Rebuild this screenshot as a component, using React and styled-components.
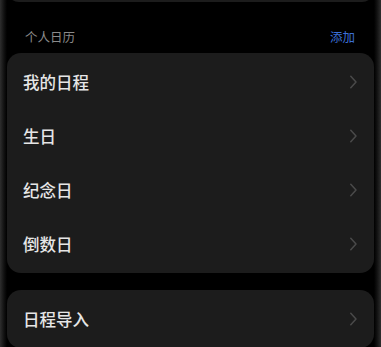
import React from 'react';
import styled, { createGlobalStyle } from 'styled-components';

const GlobalStyle = createGlobalStyle`
    html, body {
        margin: 0;
        padding: 0;
        background: #000;
    }
    body {
        font-family: "Noto Sans CJK SC", "Noto Sans", sans-serif;
    }
`;

const Screen = styled.div`
    width: 381px;
    height: 347px;
    overflow: hidden;
    background: linear-gradient(
        to right,
        #2e2e2e 0px,
        #111 4px,
        #000 7px,
        #000 calc(100% - 7px),
        #111 calc(100% - 4px),
        #2e2e2e 100%
    );
    padding: 0 7px;
    box-sizing: border-box;
`;

const Card = styled.div`
    background: #1c1c1c;
    border-radius: 14px;
    padding: 2px 0;
`;

const TopCard = styled(Card)`
    height: 40px;
    margin-top: -38px;
    padding: 0;
    border-radius: 12px;
`;

const SectionHeader = styled.div`
    display: flex;
    align-items: center;
    justify-content: space-between;
    height: 51px;
    padding: 18px 19px 0 18px;
    box-sizing: border-box;
`;

const SectionTitle = styled.span`
    font-size: 12.5px;
    color: #8a8a8a;
`;

const AddLink = styled.span`
    font-size: 12.5px;
    color: #3b6fd6;
`;

const Row = styled.div`
    display: flex;
    align-items: center;
    justify-content: space-between;
    height: 54px;
    padding: 0 16px 0 16px;
`;

const Label = styled.span`
    font-size: 16.5px;
    font-weight: 500;
    color: #e6e6e6;
`;

const Gap = styled.div`
    height: 17px;
`;

const Chevron = () => (
    <svg width="9" height="14" viewBox="0 0 9 14" fill="none">
        <path d="M1.8 1.3 L7 7 L1.8 12.7" stroke="#4a4a4a" strokeWidth="1.5" strokeLinecap="round" strokeLinejoin="round" />
    </svg>
);

const personal = ['我的日程', '生日', '纪念日', '倒数日'];

const App = () => (
    <>
        <GlobalStyle />
        <Screen>
            <TopCard />
            <SectionHeader>
                <SectionTitle>个人日历</SectionTitle>
                <AddLink>添加</AddLink>
            </SectionHeader>
            <Card>
                {personal.map((item) => (
                    <Row key={item}>
                        <Label>{item}</Label>
                        <Chevron />
                    </Row>
                ))}
            </Card>
            <Gap />
            <Card>
                <Row>
                    <Label>日程导入</Label>
                    <Chevron />
                </Row>
            </Card>
        </Screen>
    </>
);

export default App;
